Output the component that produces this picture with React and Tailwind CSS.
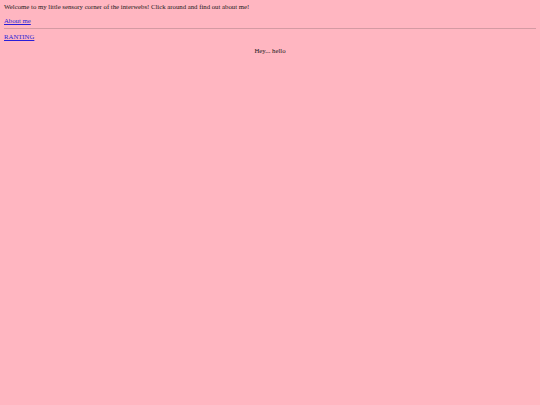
import React from 'react';

const App = () => {
  return (
    <div className="min-h-[405px] bg-[#ffb6c1] px-[4px] pt-[3px] font-['Liberation_Serif',serif] text-[6.75px] leading-[8px] text-[#1a1a1a]">
      <div>Welcome to my little sensory corner of the interwebs! Click around and find out about me!</div>
      <p className="mt-[6px] mb-[3px]">
        <a href="#" className="text-[#2a1fd8] underline">About me</a>
      </p>
      <hr className="my-[3px] border-t border-[#d49aa3]" />
      <p className="my-[4px]">
        <a href="#" className="text-[#2a1fd8] underline">RANTING</a>
      </p>
      <p className="mt-[6px] text-center">Hey... hello</p>
    </div>
  );
};

export default App;
